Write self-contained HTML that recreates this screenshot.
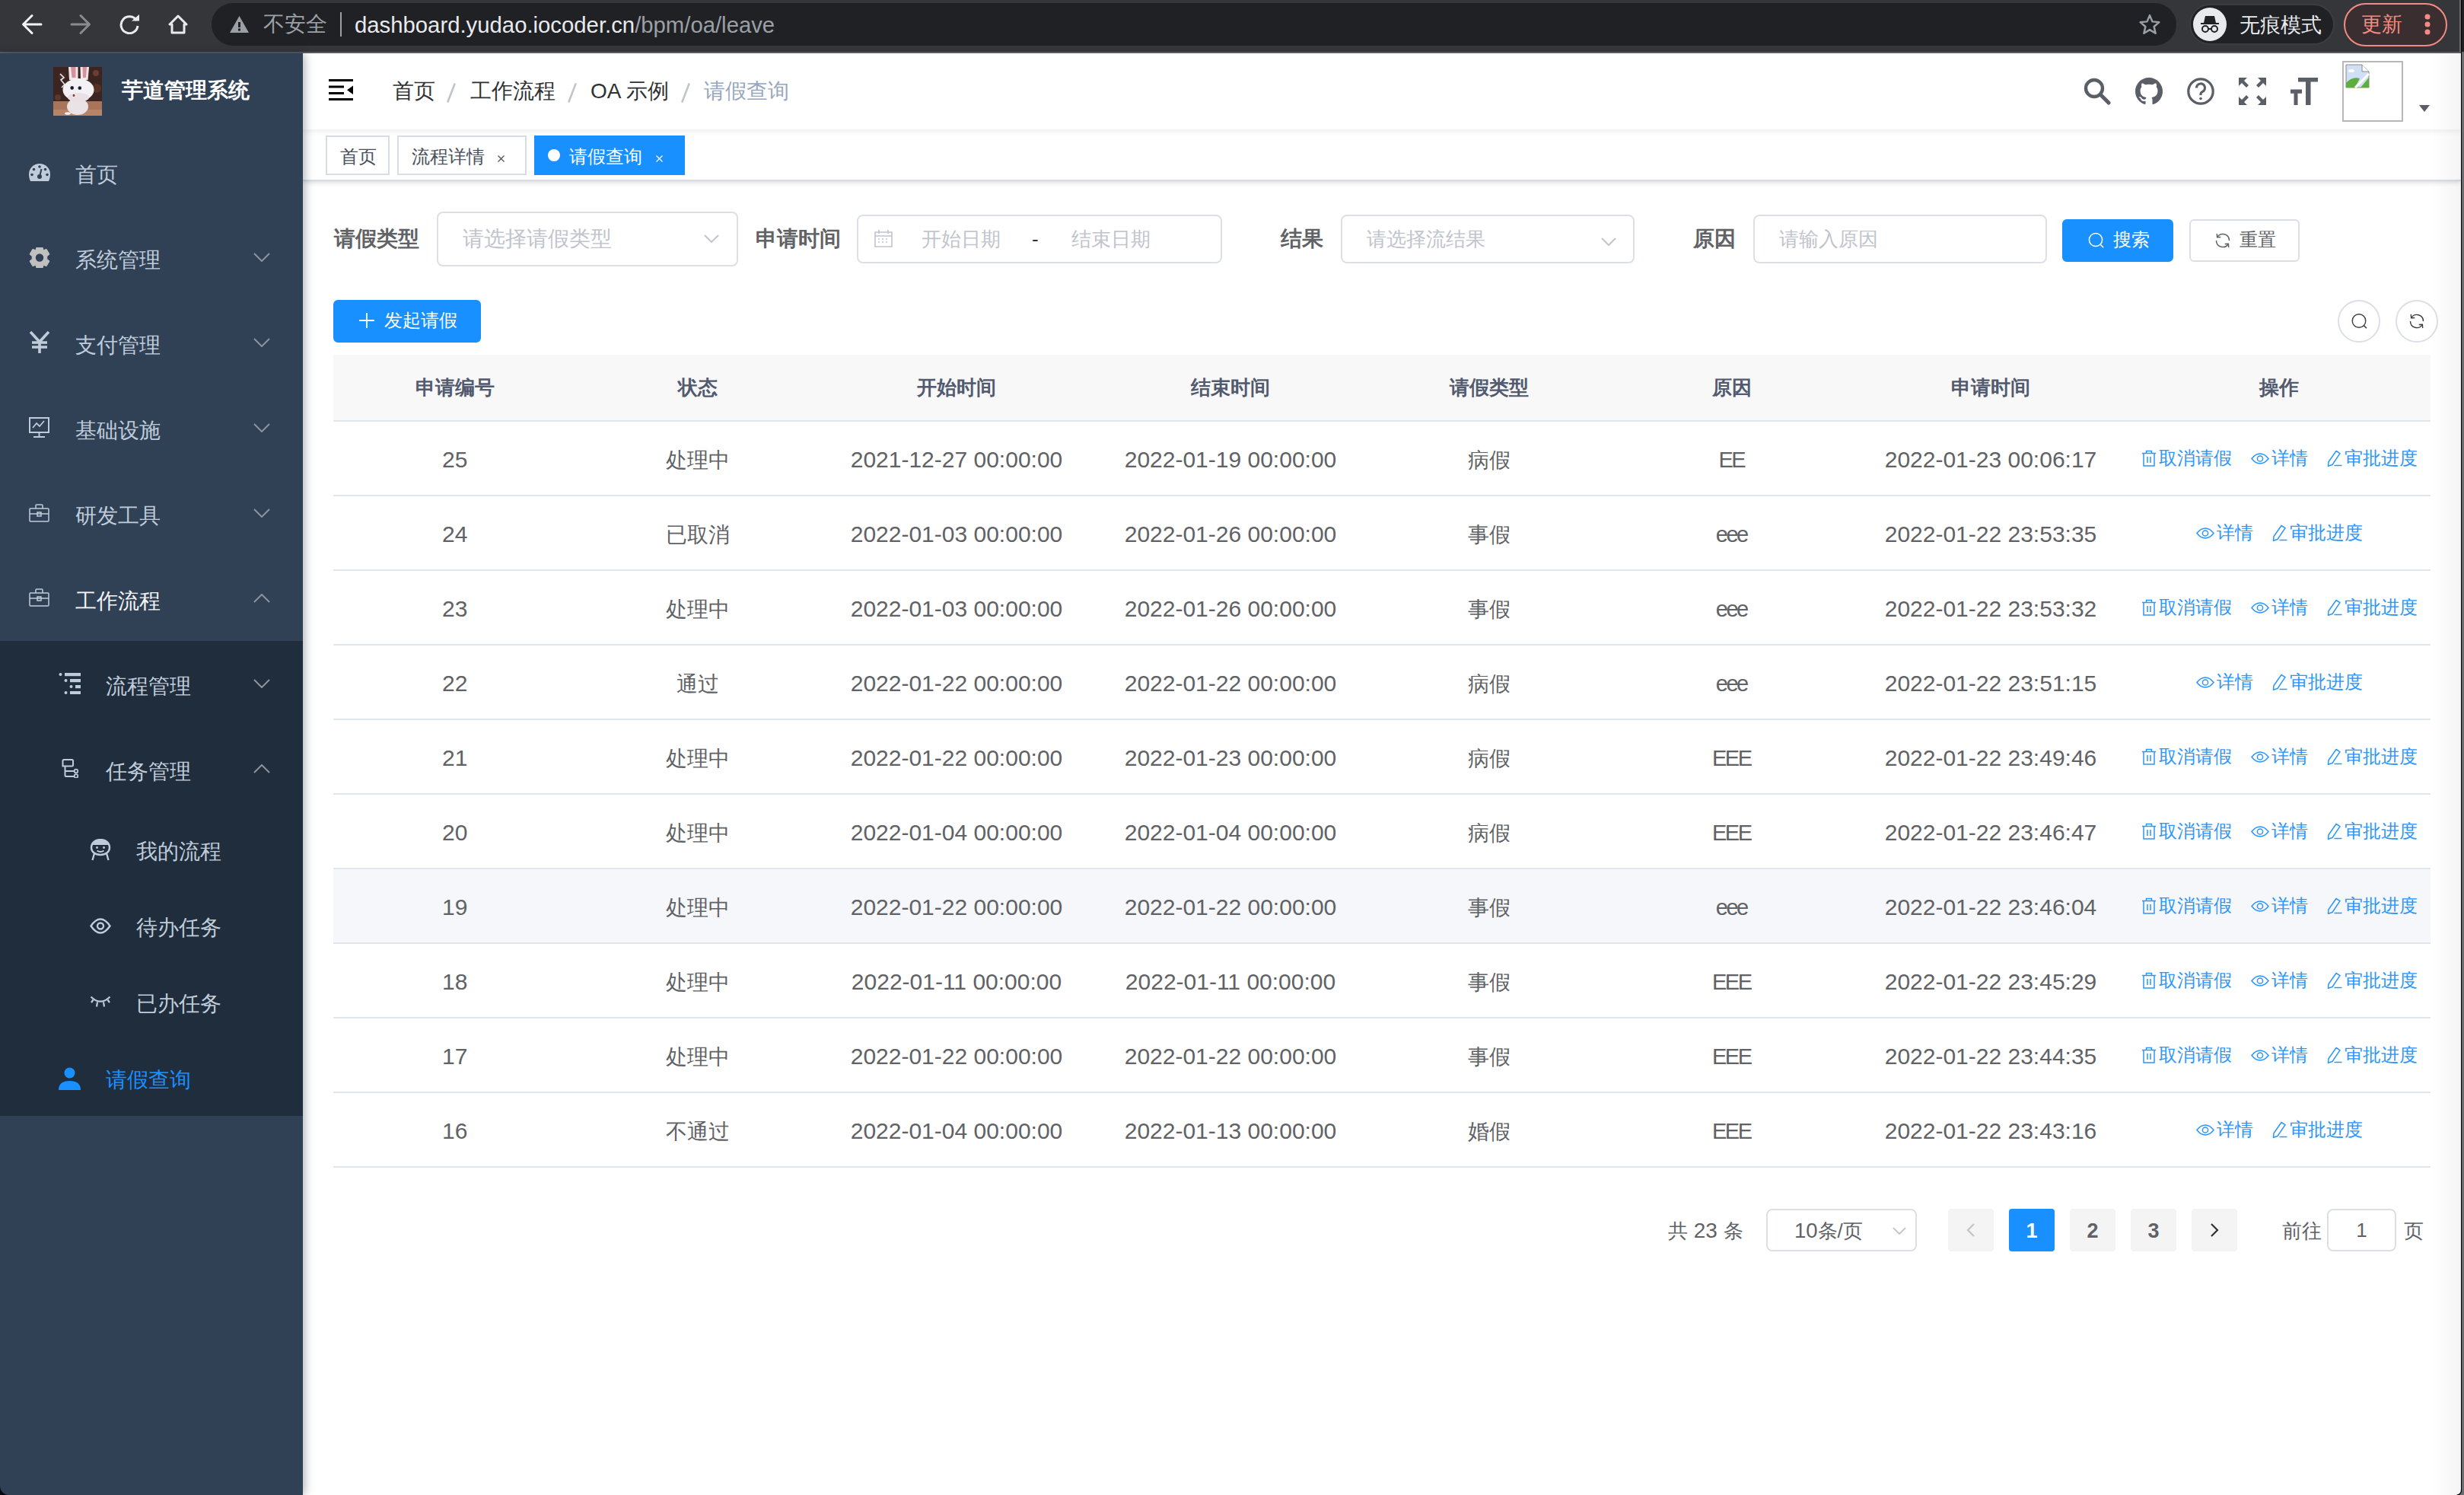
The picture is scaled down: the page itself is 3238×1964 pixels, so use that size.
<!DOCTYPE html>
<html><head><meta charset="utf-8">
<style>
*{box-sizing:border-box;margin:0;padding:0}
html,body{width:3238px;height:1964px;overflow:hidden;background:#fff;font-family:"Liberation Sans",sans-serif;}
.abs{position:absolute}
svg{display:block}
/* chrome */
#chrome{position:absolute;left:0;top:0;width:3238px;height:68px;background:#35363a}
#chromeline{position:absolute;left:0;top:68px;width:3238px;height:2px;background:#5c5d61}
#omni{position:absolute;left:278px;top:4px;width:2582px;height:56px;border-radius:28px;background:#202124}
.ctext{position:absolute;white-space:nowrap;line-height:1}
/* sidebar */
#sidebar{position:absolute;left:0;top:70px;width:398px;height:1894px;background:#304156;box-shadow:2px 0 12px rgba(0,21,41,.35);z-index:2}
.mi{position:absolute;left:0;width:398px;height:112px;color:#bfcbd9;font-size:28px}
.mi .ic{position:absolute}
.mi .tx{position:absolute;top:4px;line-height:112px;white-space:nowrap}
.mi .chev{position:absolute;left:333px;top:50px}
.sub{background:#1f2d3d}
.mi.s3{height:100px}
.mi.s3 .tx{line-height:100px;top:3px}
/* main */
#navbar{position:absolute;left:398px;top:70px;width:2836px;height:100px;background:#fff;box-shadow:0 2px 8px rgba(0,21,41,.08);z-index:1}
#tags{position:absolute;left:398px;top:170px;width:2836px;height:68px;background:#fff;border-bottom:2px solid #d8dce5;box-shadow:0 2px 6px 0 rgba(0,0,0,.12),0 0 6px 0 rgba(0,0,0,.04)}
.tag{position:absolute;top:8px;height:52px;border:2px solid #d8dce5;color:#495060;background:#fff;font-size:24px;line-height:51px;white-space:nowrap}
#rightedge{position:absolute;right:0;top:0;width:4px;height:1964px;background:#1c1c1e;z-index:5}
#rshade{position:absolute;left:3196px;top:70px;width:38px;height:1894px;background:linear-gradient(to right,rgba(0,0,0,0),rgba(0,0,0,.045));z-index:4;pointer-events:none}

.bc{position:absolute;top:0;line-height:100px;font-size:28px;color:#303133;white-space:nowrap}
.bcs{position:absolute;top:0;line-height:100px;font-size:28px;color:#c0c4cc;font-weight:bold}
.tag .x{position:absolute;top:0;font-size:24px;line-height:48px;color:#495060}

.lbl{position:absolute;top:278px;line-height:72px;font-size:28px;font-weight:bold;color:#606266;white-space:nowrap}
.inp{position:absolute;border:2px solid #dcdfe6;border-radius:8px;background:#fff}
.ph{position:absolute;top:0;line-height:60px;font-size:26px;color:#c0c4cc;white-space:nowrap}
.btn{position:absolute;border:2px solid #dcdfe6;border-radius:6px;background:#fff}
.btn.pri{background:#1890ff;border-color:#1890ff}
.bt{position:absolute;top:0;line-height:52px;font-size:24px;color:#fff;white-space:nowrap}
.circ{position:absolute;width:56px;height:56px;border:2px solid #dcdfe6;border-radius:28px;background:#fff}
.tbl{font-size:28px;color:#606266}
.thead{display:flex;height:88px;background:#f8f8f9;border-bottom:2px solid #dfe6ec}
.thead .c{font-size:26px;font-weight:bold;color:#515a6e;line-height:86px;text-align:center;white-space:nowrap}
.tr{display:flex;height:98px;border-bottom:2px solid #dfe6ec;background:#fff}
.tr.hov{background:#f5f7fa}
.tr .c{line-height:96px;text-align:center;white-space:nowrap;overflow:hidden}
.tr .c span.n{font-size:30px;position:relative;top:2px}
.tr .c span.r{font-size:29px;letter-spacing:-2.5px;left:-1px}
.tr .c span.z{position:relative;top:3px}
.ops{display:flex;justify-content:center;align-items:center;height:96px}
.op{display:flex;align-items:center;color:#2c96fc;font-size:24px;margin-left:25px}
.op:first-child{margin-left:0}
.op svg{margin-right:3px}
.pg{position:absolute;white-space:nowrap}
.pbtn{position:absolute;top:1588px;width:60px;height:56px;background:#f4f4f5;border-radius:4px;text-align:center;line-height:58px;font-size:27px;font-weight:bold;color:#606266}
.pbtn.act{background:#1890ff;color:#fff}
</style></head>
<body>
<!-- Browser chrome -->
<div id="chrome">
  <svg class="abs" style="left:28px;top:18px" width="28" height="28" viewBox="0 0 28 28"><path d="M26 14H3.5M14 2.5L2.5 14 14 25.5" stroke="#f1f3f4" stroke-width="3" fill="none" stroke-linecap="round" stroke-linejoin="round"/></svg>
  <svg class="abs" style="left:92px;top:18px" width="28" height="28" viewBox="0 0 28 28"><path d="M2 14h22.5M14 2.5L25.5 14 14 25.5" stroke="#8a8b8e" stroke-width="3" fill="none" stroke-linecap="round" stroke-linejoin="round"/></svg>
  <svg class="abs" style="left:157px;top:19px" width="28" height="26" viewBox="0 0 28 26"><path d="M22.5 8A11 11 0 1 0 24 15" stroke="#e8eaed" stroke-width="3" fill="none"/><path d="M16 8.5h10V0z" fill="#e8eaed"/></svg>
  <svg class="abs" style="left:221px;top:19px" width="26" height="26" viewBox="0 0 26 26"><path d="M13 2L2 13h3v11h16V13h3z" stroke="#e8eaed" stroke-width="3" fill="none" stroke-linejoin="round"/></svg>
  <div id="omni">
    <svg class="abs" style="left:24px;top:17px" width="25" height="22" viewBox="0 0 25 22"><path d="M12.5 0L25 22H0z" fill="#9aa0a6"/><rect x="11" y="8" width="3" height="7" fill="#202124"/><rect x="11" y="16.5" width="3" height="3" fill="#202124"/></svg>
    <div class="ctext" style="left:68px;top:14px;font-size:28px;color:#9aa0a6">不安全</div>
    <div class="abs" style="left:169px;top:12px;width:2px;height:32px;background:#9aa0a6"></div>
    <div class="ctext" style="left:188px;top:14px;font-size:29.3px;color:#e8eaed">dashboard.yudao.iocoder.cn<span style="color:#9aa0a6">/bpm/oa/leave</span></div>
    <svg class="abs" style="left:2532px;top:13px" width="30" height="30" viewBox="0 0 24 24"><path d="M12 2.5l2.8 6.6 7.1.6-5.4 4.7 1.6 7-6.1-3.7-6.1 3.7 1.6-7L2.1 9.7l7.1-.6z" stroke="#9aa0a6" stroke-width="2" fill="none" stroke-linejoin="round"/></svg>
  </div>
  <div class="abs" style="left:2877px;top:5px;width:191px;height:54px;border-radius:27px;background:#202124;border:2px solid #3c3d41"></div>
  <div class="abs" style="left:2882px;top:10px;width:44px;height:44px;border-radius:22px;background:#e8eaed"></div>
  <svg class="abs" style="left:2888px;top:16px" width="32" height="32" viewBox="0 0 32 32"><path d="M10 5h12l2 9H8z" fill="#202124"/><rect x="4" y="14" width="24" height="2" fill="#202124"/><circle cx="10" cy="22" r="4" stroke="#202124" stroke-width="2" fill="none"/><circle cx="22" cy="22" r="4" stroke="#202124" stroke-width="2" fill="none"/><path d="M14 22h4" stroke="#202124" stroke-width="2"/></svg>
  <div class="ctext" style="left:2943px;top:20px;font-size:26.5px;color:#e8eaed">无痕模式</div>
  <div class="abs" style="left:3080px;top:4px;width:136px;height:57px;border-radius:29px;background:#3b2e31;border:2px solid #f28b82"></div>
  <div class="ctext" style="left:3103px;top:19px;font-size:27px;color:#f28b82">更新</div>
  <svg class="abs" style="left:3184px;top:16px" width="12" height="32" viewBox="0 0 12 32"><circle cx="6" cy="6" r="3.5" fill="#f28b82"/><circle cx="6" cy="16" r="3.5" fill="#f28b82"/><circle cx="6" cy="26" r="3.5" fill="#f28b82"/></svg>
</div>
<div id="chromeline"></div>
<div class="abs" style="left:3232px;top:0;width:2px;height:68px;background:#6a6a6e;z-index:5"></div>
<div class="abs" style="left:3234px;top:0;width:1px;height:1964px;background:#000;z-index:5"></div>
<div class="abs" style="left:3235px;top:0;width:3px;height:68px;background:#1f1f21;z-index:5"></div>
<div class="abs" style="left:3235px;top:68px;width:3px;height:1896px;background:#6b6c70;z-index:5"></div>
<svg class="abs" style="left:3226px;top:1956px;z-index:6" width="9" height="8" viewBox="0 0 9 8"><path d="M8.5 0v2A6 6 0 0 1 2.5 8H9V0z" fill="#6b6c70"/><path d="M8.5 0v2A6 6 0 0 1 2.5 8" stroke="#000" stroke-width="1.2" fill="none"/></svg>
<svg class="abs" style="left:0;top:1952px;z-index:6" width="12" height="12" viewBox="0 0 12 12"><path d="M0 0A12 12 0 0 0 12 12H0z" fill="#000" opacity=".85"/></svg>

<!-- SIDEBAR -->
<div id="sidebar">

  <svg class="abs" style="left:70px;top:18px" width="64" height="64" viewBox="0 0 64 64">
        <rect width="64" height="64" fill="#2e1a16"/>
    <rect y="0" width="64" height="46" fill="#3c2520"/>
    <circle cx="56" cy="8" r="4" fill="#7a4a3a" opacity=".7"/><circle cx="57" cy="28" r="6" fill="#5a3628" opacity=".8"/><circle cx="6" cy="40" r="4" fill="#6a4030" opacity=".7"/><circle cx="12" cy="12" r="5" fill="#4a3028" opacity=".8"/>
    <rect y="45" width="64" height="19" fill="#a8745a"/>
    <rect y="56" width="64" height="8" fill="#b88468"/>
    <g>
    <path d="M20 0h12.5v17H21z" fill="#eeeaec"/><path d="M23 0h6.5v14h-5z" fill="#d9909a"/>
    <path d="M35.5 0h11.5l-1.5 17H36z" fill="#eeeaec"/><path d="M38.5 0h5.5l-1 14h-4z" fill="#d9909a"/>
    <ellipse cx="32" cy="52" rx="14" ry="11" fill="#e9e3e6"/>
    <ellipse cx="33" cy="30" rx="20.5" ry="15" fill="#f3f1f3"/>
    <ellipse cx="33" cy="40" rx="14" ry="6" fill="#eadfe3"/>
    <path d="M9 9l5 5-4 3 5 6-4 4" stroke="#e8e8ea" stroke-width="1.6" fill="none"/>
    <ellipse cx="19" cy="61" rx="4" ry="1.8" fill="#f0eef0"/>
    </g>
    <circle cx="24.7" cy="27.5" r="2.4" fill="#2a3a5a"/><circle cx="34.8" cy="27.7" r="2.4" fill="#2a3a5a"/>
    <circle cx="24.7" cy="27.5" r="1.4" fill="#101010"/><circle cx="34.8" cy="27.7" r="1.4" fill="#101010"/>
    <ellipse cx="27" cy="37.3" rx="1.3" ry="1.6" fill="#7a3a28"/>
  </svg>
  <div class="abs" style="left:160px;top:-1px;height:100px;line-height:100px;font-size:28px;font-weight:bold;color:#fff;white-space:nowrap">芋道管理系统</div>

  <div class="mi" style="top:100px">
    <svg class="ic" style="left:38px;top:45px" width="28" height="23" viewBox="0 0 28 23"><path d="M14 0A14 14 0 0 0 0 14c0 3 .6 6 2 9h24c1.4-3 2-6 2-9A14 14 0 0 0 14 0z" fill="#bfcbd9"/><circle cx="14" cy="4" r="1.8" fill="#304156"/><circle cx="6.5" cy="7.5" r="1.8" fill="#304156"/><circle cx="21.5" cy="7.5" r="1.8" fill="#304156"/><circle cx="4" cy="14.5" r="1.8" fill="#304156"/><circle cx="24" cy="14.5" r="1.8" fill="#304156"/><circle cx="14" cy="17" r="3" fill="#304156"/><path d="M14 17l2.5-10" stroke="#304156" stroke-width="2"/></svg>
    <div class="tx" style="left:99px">首页</div>
  </div>
  <div class="mi" style="top:212px">
    <svg class="ic" style="left:38px;top:43px" width="28" height="27" viewBox="0 0 28 27"><path d="M10 0h8l1.2 3.8 3.8-1.6 4 6.8-3.2 2.6v3.8l3.2 2.6-4 6.8-3.8-1.6L18 27h-8l-1.2-3.8-3.8 1.6-4-6.8 3.2-2.6v-3.8L1 9l4-6.8 3.8 1.6z" fill="#c0c0c0" stroke="#c0c0c0" stroke-width="1" stroke-linejoin="round"/><circle cx="14" cy="13.5" r="5.2" fill="#304156"/></svg>
    <div class="tx" style="left:99px">系统管理</div>
    <svg class="chev" width="22" height="12" viewBox="0 0 22 12"><path d="M1 1l10 10L21 1" stroke="#909399" stroke-width="2" fill="none"/></svg>
  </div>
  <div class="mi" style="top:324px">
    <svg class="ic" style="left:38px;top:41px" width="28" height="29" viewBox="0 0 28 29"><path d="M2 1l12 13L26 1M14 14v15M4 15h20M4 21h20" stroke="#bfcbd9" stroke-width="3.6" fill="none"/></svg>
    <div class="tx" style="left:99px">支付管理</div>
    <svg class="chev" width="22" height="12" viewBox="0 0 22 12"><path d="M1 1l10 10L21 1" stroke="#909399" stroke-width="2" fill="none"/></svg>
  </div>
  <div class="mi" style="top:436px">
    <svg class="ic" style="left:38px;top:42px" width="27" height="27" viewBox="0 0 27 27"><path d="M1 1h25v19H1zM13.5 20v6M6 26h15" stroke="#bfcbd9" stroke-width="2" fill="none"/><path d="M5 14l5-6 4 4 6-7" stroke="#bfcbd9" stroke-width="1.8" fill="none"/></svg>
    <div class="tx" style="left:99px">基础设施</div>
    <svg class="chev" width="22" height="12" viewBox="0 0 22 12"><path d="M1 1l10 10L21 1" stroke="#909399" stroke-width="2" fill="none"/></svg>
  </div>
  <div class="mi" style="top:548px">
    <svg class="ic" style="left:38px;top:44px" width="27" height="24" viewBox="0 0 27 24"><path d="M2 6h23q1 0 1 1v15q0 1-1 1H2q-1 0-1-1V7q0-1 1-1zM9 6V2q0-1 1-1h7q1 0 1 1v4M1 13h25M11 11h5v5h-5z" stroke="#bfcbd9" stroke-width="1.5" fill="none"/></svg>
    <div class="tx" style="left:99px">研发工具</div>
    <svg class="chev" width="22" height="12" viewBox="0 0 22 12"><path d="M1 1l10 10L21 1" stroke="#909399" stroke-width="2" fill="none"/></svg>
  </div>
  <div class="mi" style="top:660px">
    <svg class="ic" style="left:38px;top:43px" width="27" height="24" viewBox="0 0 27 24"><path d="M2 6h23q1 0 1 1v15q0 1-1 1H2q-1 0-1-1V7q0-1 1-1zM9 6V2q0-1 1-1h7q1 0 1 1v4M1 13h25M11 11h5v5h-5z" stroke="#bfcbd9" stroke-width="1.5" fill="none"/></svg>
    <div class="tx" style="left:99px;color:#f4f4f5">工作流程</div>
    <svg class="chev" width="22" height="12" viewBox="0 0 22 12"><path d="M1 11L11 1l10 10" stroke="#909399" stroke-width="2" fill="none"/></svg>
  </div>
  <div class="abs sub" style="left:0;top:772px;width:398px;height:624px"></div>
  <div class="mi" style="top:772px">
    <svg class="ic" style="left:77px;top:13px" width="30" height="30" viewBox="0 0 30 30"></svg>
    <svg class="ic" style="left:77px;top:41px" width="29" height="29" viewBox="0 0 29 29"><circle cx="2.5" cy="3" r="2" fill="#bfcbd9"/><rect x="8" y="1" width="21" height="4.2" fill="#bfcbd9"/><circle cx="9.5" cy="11" r="2" fill="#bfcbd9"/><rect x="15" y="9" width="14" height="4.2" fill="#bfcbd9"/><circle cx="16.5" cy="19" r="2" fill="#bfcbd9"/><rect x="22" y="17" width="7" height="4.2" fill="#bfcbd9"/><circle cx="9.5" cy="27" r="2" fill="#bfcbd9"/><rect x="15" y="25" width="14" height="4.2" fill="#bfcbd9"/></svg>
    <div class="tx" style="left:139px">流程管理</div>
    <svg class="chev" width="22" height="12" viewBox="0 0 22 12"><path d="M1 1l10 10L21 1" stroke="#909399" stroke-width="2" fill="none"/></svg>
  </div>
  <div class="mi" style="top:884px">
    <svg class="ic" style="left:81px;top:43px" width="22" height="25" viewBox="0 0 22 25"><path d="M4 9.5H1.5V2.5Q1.5 1 3 1h10.5q1.5 0 1.5 1.5v5.5q0 1.5-1.5 1.5H4.5v12q0 1.5 1.5 1.5h11" stroke="#bfcbd9" stroke-width="2" fill="none"/><path d="M4.5 16h12.5" stroke="#bfcbd9" stroke-width="2"/><circle cx="19" cy="16" r="2.3" stroke="#bfcbd9" stroke-width="1.8" fill="#1f2d3d"/><circle cx="19" cy="22.5" r="2.3" stroke="#bfcbd9" stroke-width="1.8" fill="#1f2d3d"/></svg>
    <div class="tx" style="left:139px">任务管理</div>
    <svg class="chev" width="22" height="12" viewBox="0 0 22 12"><path d="M1 11L11 1l10 10" stroke="#909399" stroke-width="2" fill="none"/></svg>
  </div>
  <div class="mi s3" style="top:996px">
    <svg class="ic" style="left:117px;top:36px" width="30" height="29" viewBox="0 0 30 29"><path d="M15 1C8 1 3 5.5 3 11.5 3 17 8 21 15 21s12-4 12-9.5C27 5.5 22 1 15 1z" stroke="#bfcbd9" stroke-width="2.4" fill="none"/><path d="M4.5 8C7 3.5 11 1.5 15 1.5S23 3.5 25.5 8z" fill="#bfcbd9"/><circle cx="10.5" cy="11.5" r="1.4" fill="#bfcbd9"/><circle cx="19.5" cy="11.5" r="1.4" fill="#bfcbd9"/><path d="M10.5 15.5q4.5 3 9 0" stroke="#bfcbd9" stroke-width="1.8" fill="none"/><path d="M7 19l-2.5 9M23 19l2.5 9" stroke="#bfcbd9" stroke-width="2.4"/></svg>
    <div class="tx" style="left:179px">我的流程</div>
  </div>
  <div class="mi s3" style="top:1096px">
    <svg class="ic" style="left:118px;top:40px" width="28" height="21" viewBox="0 0 28 21"><path d="M1.5 10.5Q7.5 1.5 14 1.5T26.5 10.5Q20.5 19.5 14 19.5T1.5 10.5z" stroke="#bfcbd9" stroke-width="2.4" fill="none"/><circle cx="14" cy="10.5" r="4" stroke="#bfcbd9" stroke-width="2.4" fill="none"/></svg>
    <div class="tx" style="left:179px">待办任务</div>
  </div>
  <div class="mi s3" style="top:1196px">
    <svg class="ic" style="left:118px;top:42px" width="28" height="16" viewBox="0 0 28 16"><path d="M1.5 1.5Q14 14 26.5 1.5" stroke="#bfcbd9" stroke-width="2.2" fill="none"/><path d="M4.5 5.5L2 9M10 8.5l-1 6M18 8.5l1 6M23.5 5.5L26 9" stroke="#bfcbd9" stroke-width="2.2"/></svg>
    <div class="tx" style="left:179px">已办任务</div>
  </div>
  <div class="mi s3" style="top:1296px">
    <svg class="ic" style="left:77px;top:36px" width="29" height="30" viewBox="0 0 29 30"><circle cx="14.5" cy="7.5" r="7" fill="#1890ff"/><path d="M0 30q0-12 14.5-12T29 30z" fill="#1890ff"/></svg>
    <div class="tx" style="left:139px;color:#1890ff">请假查询</div>
  </div>

</div>

<!-- NAVBAR -->
<div id="navbar">

  <svg class="abs" style="left:34px;top:34px" width="32" height="28" viewBox="0 0 32 28"><rect x="0" y="0" width="32" height="3" fill="#000"/><rect x="0" y="8.5" width="20" height="3" fill="#000"/><rect x="0" y="17" width="20" height="3" fill="#000"/><rect x="0" y="25" width="32" height="3" fill="#000"/><path d="M32 8.5v11.5l-8-5.75z" fill="#000"/></svg>
  <div class="bc" style="left:118px">首页</div>
  <svg class="abs" style="left:189px;top:39px" width="12" height="26" viewBox="0 0 12 26"><path d="M10.8 0.5L1.2 25.5" stroke="#c0c4cc" stroke-width="2.6"/></svg>
  <div class="bc" style="left:220px">工作流程</div>
  <svg class="abs" style="left:348px;top:39px" width="12" height="26" viewBox="0 0 12 26"><path d="M10.8 0.5L1.2 25.5" stroke="#c0c4cc" stroke-width="2.6"/></svg>
  <div class="bc" style="left:378px">OA 示例</div>
  <svg class="abs" style="left:496.5px;top:39px" width="12" height="26" viewBox="0 0 12 26"><path d="M10.8 0.5L1.2 25.5" stroke="#c0c4cc" stroke-width="2.6"/></svg>
  <div class="bc" style="left:527px;color:#97a8be">请假查询</div>
  <svg class="abs" style="left:2340px;top:32px" width="36" height="36" viewBox="0 0 36 36"><circle cx="14" cy="14" r="11" stroke="#5a5e66" stroke-width="4.4" fill="none"/><path d="M22 22l11 11" stroke="#5a5e66" stroke-width="5" stroke-linecap="round"/></svg>
  <svg class="abs" style="left:2408px;top:32px" width="36" height="36" viewBox="0 0 16 16"><path fill="#5a5e66" d="M8 0C3.58 0 0 3.58 0 8c0 3.54 2.29 6.53 5.47 7.59.4.07.55-.17.55-.38 0-.19-.01-.82-.01-1.49-2.01.37-2.53-.49-2.69-.94-.09-.23-.48-.94-.82-1.13-.28-.15-.68-.52-.01-.53.63-.01 1.08.58 1.23.82.72 1.21 1.87.87 2.33.66.07-.52.28-.87.51-1.07-1.78-.2-3.64-.89-3.64-3.95 0-.87.31-1.59.82-2.15-.08-.2-.36-1.02.08-2.12 0 0 .67-.21 2.2.82.64-.18 1.32-.27 2-.27.68 0 1.36.09 2 .27 1.53-1.04 2.2-.82 2.2-.82.44 1.1.16 1.92.08 2.12.51.56.82 1.27.82 2.15 0 3.07-1.87 3.75-3.65 3.95.29.25.54.73.54 1.48 0 1.07-.01 1.93-.01 2.2 0 .21.15.46.55.38A8.013 8.013 0 0016 8c0-4.42-3.58-8-8-8z"/></svg>
  <svg class="abs" style="left:2476px;top:32px" width="36" height="36" viewBox="0 0 36 36"><circle cx="18" cy="18" r="16.2" stroke="#5a5e66" stroke-width="3.2" fill="none"/><path d="M12.5 13.5a5.5 5.5 0 1 1 7.5 5.1c-1.3.6-2 1.4-2 2.8v1.6" stroke="#5a5e66" stroke-width="3.2" fill="none"/><circle cx="18" cy="27.5" r="1.8" fill="#5a5e66"/></svg>
  <svg class="abs" style="left:2544px;top:32px" width="36" height="36" viewBox="0 0 36 36"><path fill="#5a5e66" d="M0 0h11l-4 4 6 6-3 3-6-6-4 4zM36 0v11l-4-4-6 6-3-3 6-6-4-4zM0 36V25l4 4 6-6 3 3-6 6 4 4zM36 36H25l4-4-6-6 3-3 6 6 4-4z"/></svg>
  <svg class="abs" style="left:2612px;top:32px" width="36" height="36" viewBox="0 0 36 36"><path fill="#5a5e66" d="M10 0h26v5.5H26.5V36h-6.5V5.5H10zM0 15.5h15v5.2H9.5V36H4.5V20.7H0z"/></svg>
  <div class="abs" style="left:2680px;top:10px;width:80px;height:80px;border:2px solid #b8b8b8;background:#fff"></div>
  <svg class="abs" style="left:2684px;top:14px" width="32" height="32" viewBox="0 0 32 32"><path d="M1 1h21l9 9v21H1z" fill="#cfdff5" stroke="#8a8a8a" stroke-width="1"/><path d="M22 1v9h9" fill="#fff" stroke="#8a8a8a" stroke-width="1"/><path d="M1 31v-6q8-9 18-6l-6 12z" fill="#5cae3e"/><path d="M31 18v13H20z" fill="#5cae3e"/><path d="M13 31l18-18" stroke="#fff" stroke-width="3"/><ellipse cx="8" cy="9" rx="4" ry="2" fill="#fff"/></svg>
  <svg class="abs" style="left:2781px;top:68px" width="14" height="9" viewBox="0 0 14 9"><path d="M0 0h14L7 9z" fill="#5a5e66"/></svg>

</div>
<div id="tags">

  <div class="tag" style="left:30px;width:84px;padding-left:17px">首页</div>
  <div class="tag" style="left:124px;width:170px;padding-left:17px">流程详情<svg class="abs" style="left:129px;top:23px" width="11" height="11" viewBox="0 0 11 11"><path d="M1.5 1.5l8 8M9.5 1.5l-8 8" stroke="#495060" stroke-width="1.2"/></svg></div>
  <div class="tag" style="left:304px;width:198px;background:#1890ff;border-color:#1890ff;color:#fff;padding-left:44px"><span class="abs" style="left:16px;top:16px;width:16px;height:16px;border-radius:8px;background:#fff"></span>请假查询<svg class="abs" style="left:157px;top:23px" width="11" height="11" viewBox="0 0 11 11"><path d="M1.5 1.5l8 8M9.5 1.5l-8 8" stroke="#fff" stroke-width="1.2"/></svg></div>

</div>


<div id="content">
  <div class="lbl" style="left:439px">请假类型</div>
  <div class="inp" style="left:574px;top:278px;width:396px;height:72px"><span class="ph" style="left:32px;font-size:28px;line-height:68px">请选择请假类型</span>
    <svg class="abs" style="left:349px;top:28px" width="20" height="11" viewBox="0 0 20 11"><path d="M1 1l9 9 9-9" stroke="#c0c4cc" stroke-width="2" fill="none"/></svg></div>
  <div class="lbl" style="left:993px">申请时间</div>
  <div class="inp" style="left:1126px;top:282px;width:480px;height:64px">
    <svg class="abs" style="left:21px;top:18px" width="24" height="23" viewBox="0 0 24 23"><path d="M1 3h22v19H1zM1 8h22M6 0v5M18 0v5" stroke="#c0c4cc" stroke-width="1.6" fill="none"/><path d="M5 12h2M10 12h2M15 12h2M5 16h2M10 16h2M15 16h2" stroke="#c0c4cc" stroke-width="1.6"/></svg>
    <span class="ph" style="left:83px">开始日期</span><span class="ph" style="left:228px;color:#303133">-</span><span class="ph" style="left:280px">结束日期</span></div>
  <div class="lbl" style="left:1683px">结果</div>
  <div class="inp" style="left:1762px;top:282px;width:386px;height:64px"><span class="ph" style="left:32px">请选择流结果</span>
    <svg class="abs" style="left:340px;top:28px" width="20" height="11" viewBox="0 0 20 11"><path d="M1 1l9 9 9-9" stroke="#c0c4cc" stroke-width="2" fill="none"/></svg></div>
  <div class="lbl" style="left:2225px">原因</div>
  <div class="inp" style="left:2304px;top:282px;width:386px;height:64px"><span class="ph" style="left:32px">请输入原因</span></div>
  <div class="btn pri" style="left:2710px;top:288px;width:146px;height:56px">
    <svg class="abs" style="left:32px;top:15px" width="22" height="22" viewBox="0 0 22 22"><circle cx="10" cy="10" r="8.6" stroke="#fff" stroke-width="1.5" fill="none"/><path d="M16.2 16.2l4 4" stroke="#fff" stroke-width="1.6"/></svg>
    <span class="bt" style="left:65px;top:-1px">搜索</span></div>
  <div class="btn" style="left:2877px;top:288px;width:145px;height:56px">
    <svg class="abs" style="left:32px;top:16px" width="20" height="20" viewBox="0 0 20 20"><path d="M2.64 5.75A8.5 8.5 0 0 1 18.5 10M1.5 10A8.5 8.5 0 0 0 17.36 14.25" stroke="#606266" stroke-width="1.5" fill="none"/><path d="M2.3 1L2.64 5.75 7.3 5.5M12.7 14.5l4.66-.25.34 4.75" stroke="#606266" stroke-width="1.5" fill="none"/></svg>
    <span class="bt" style="left:64px;top:-1px;color:#606266">重置</span></div>

  <div class="btn pri" style="left:438px;top:394px;width:194px;height:56px">
    <svg class="abs" style="left:32px;top:15px" width="20" height="20" viewBox="0 0 20 20"><path d="M10 0v20M0 10h20" stroke="#fff" stroke-width="1.8"/></svg>
    <span class="bt" style="left:65px;top:-1px">发起请假</span></div>
  <div class="circ" style="left:3072px;top:394px"><svg class="abs" style="left:16px;top:15px" width="22" height="22" viewBox="0 0 22 22"><circle cx="10" cy="10.5" r="8.8" stroke="#3c3d40" stroke-width="1.4" fill="none"/><path d="M16.4 16.6l3.6 3.6" stroke="#3c3d40" stroke-width="1.5"/></svg></div>
  <div class="circ" style="left:3148px;top:394px"><svg class="abs" style="left:16px;top:15px" width="20" height="22" viewBox="0 0 20 22"><path d="M2.64 6.75A8.5 8.5 0 0 1 18.5 11M1.5 11A8.5 8.5 0 0 0 17.36 15.25" stroke="#3c3d40" stroke-width="1.4" fill="none"/><path d="M2.3 2L2.64 6.75 7.3 6.5M12.7 15.5l4.66-.25.34 4.75" stroke="#3c3d40" stroke-width="1.4" fill="none"/></svg></div>
<div class="abs tbl" style="left:438px;top:466px;width:2756px">
<div class="thead"><div class="c" style="width:319.5px"><span class="z">申请编号</span></div><div class="c" style="width:319.5px"><span class="z">状态</span></div><div class="c" style="width:360px"><span class="z">开始时间</span></div><div class="c" style="width:360px"><span class="z">结束时间</span></div><div class="c" style="width:319.5px"><span class="z">请假类型</span></div><div class="c" style="width:319.5px"><span class="z">原因</span></div><div class="c" style="width:360px"><span class="z">申请时间</span></div><div class="c" style="width:398px"><span class="z">操作</span></div></div>
<div class="tr"><div class="c" style="width:319.5px"><span class="n">25</span></div><div class="c" style="width:319.5px"><span class="z">处理中</span></div><div class="c" style="width:360px"><span class="n">2021-12-27 00:00:00</span></div><div class="c" style="width:360px"><span class="n">2022-01-19 00:00:00</span></div><div class="c" style="width:319.5px"><span class="z">病假</span></div><div class="c" style="width:319.5px"><span class="n r">EE</span></div><div class="c" style="width:360px"><span class="n">2022-01-23 00:06:17</span></div><div class="c" style="width:398px"><div class="ops"><span class="op"><svg width="20" height="22" viewBox="0 0 20 22"><path d="M1 4.5h18M6.5 4.5V1.5h7v3M3 4.5v16.5h14V4.5M8 9v8M12 9v8" stroke="#2c96fc" stroke-width="1.5" fill="none"/></svg><span>取消请假</span></span><span class="op"><svg width="24" height="15" viewBox="0 0 24 15"><path d="M1 7.5Q6 1 12 1t11 6.5Q18 14 12 14T1 7.5z" stroke="#2c96fc" stroke-width="1.5" fill="none"/><circle cx="12" cy="7.5" r="3.6" stroke="#2c96fc" stroke-width="1.5" fill="none"/></svg><span>详情</span></span><span class="op"><svg width="20" height="22" viewBox="0 0 20 22"><path d="M12 1.5l5 3.2L7 19.5l-5.5 1.8.5-5.6z" stroke="#2c96fc" stroke-width="1.5" fill="none" stroke-linejoin="round"/><path d="M9.5 20.5h10" stroke="#2c96fc" stroke-width="1.5"/></svg><span>审批进度</span></span></div></div></div>
<div class="tr"><div class="c" style="width:319.5px"><span class="n">24</span></div><div class="c" style="width:319.5px"><span class="z">已取消</span></div><div class="c" style="width:360px"><span class="n">2022-01-03 00:00:00</span></div><div class="c" style="width:360px"><span class="n">2022-01-26 00:00:00</span></div><div class="c" style="width:319.5px"><span class="z">事假</span></div><div class="c" style="width:319.5px"><span class="n r">eee</span></div><div class="c" style="width:360px"><span class="n">2022-01-22 23:53:35</span></div><div class="c" style="width:398px"><div class="ops"><span class="op"><svg width="24" height="15" viewBox="0 0 24 15"><path d="M1 7.5Q6 1 12 1t11 6.5Q18 14 12 14T1 7.5z" stroke="#2c96fc" stroke-width="1.5" fill="none"/><circle cx="12" cy="7.5" r="3.6" stroke="#2c96fc" stroke-width="1.5" fill="none"/></svg><span>详情</span></span><span class="op"><svg width="20" height="22" viewBox="0 0 20 22"><path d="M12 1.5l5 3.2L7 19.5l-5.5 1.8.5-5.6z" stroke="#2c96fc" stroke-width="1.5" fill="none" stroke-linejoin="round"/><path d="M9.5 20.5h10" stroke="#2c96fc" stroke-width="1.5"/></svg><span>审批进度</span></span></div></div></div>
<div class="tr"><div class="c" style="width:319.5px"><span class="n">23</span></div><div class="c" style="width:319.5px"><span class="z">处理中</span></div><div class="c" style="width:360px"><span class="n">2022-01-03 00:00:00</span></div><div class="c" style="width:360px"><span class="n">2022-01-26 00:00:00</span></div><div class="c" style="width:319.5px"><span class="z">事假</span></div><div class="c" style="width:319.5px"><span class="n r">eee</span></div><div class="c" style="width:360px"><span class="n">2022-01-22 23:53:32</span></div><div class="c" style="width:398px"><div class="ops"><span class="op"><svg width="20" height="22" viewBox="0 0 20 22"><path d="M1 4.5h18M6.5 4.5V1.5h7v3M3 4.5v16.5h14V4.5M8 9v8M12 9v8" stroke="#2c96fc" stroke-width="1.5" fill="none"/></svg><span>取消请假</span></span><span class="op"><svg width="24" height="15" viewBox="0 0 24 15"><path d="M1 7.5Q6 1 12 1t11 6.5Q18 14 12 14T1 7.5z" stroke="#2c96fc" stroke-width="1.5" fill="none"/><circle cx="12" cy="7.5" r="3.6" stroke="#2c96fc" stroke-width="1.5" fill="none"/></svg><span>详情</span></span><span class="op"><svg width="20" height="22" viewBox="0 0 20 22"><path d="M12 1.5l5 3.2L7 19.5l-5.5 1.8.5-5.6z" stroke="#2c96fc" stroke-width="1.5" fill="none" stroke-linejoin="round"/><path d="M9.5 20.5h10" stroke="#2c96fc" stroke-width="1.5"/></svg><span>审批进度</span></span></div></div></div>
<div class="tr"><div class="c" style="width:319.5px"><span class="n">22</span></div><div class="c" style="width:319.5px"><span class="z">通过</span></div><div class="c" style="width:360px"><span class="n">2022-01-22 00:00:00</span></div><div class="c" style="width:360px"><span class="n">2022-01-22 00:00:00</span></div><div class="c" style="width:319.5px"><span class="z">病假</span></div><div class="c" style="width:319.5px"><span class="n r">eee</span></div><div class="c" style="width:360px"><span class="n">2022-01-22 23:51:15</span></div><div class="c" style="width:398px"><div class="ops"><span class="op"><svg width="24" height="15" viewBox="0 0 24 15"><path d="M1 7.5Q6 1 12 1t11 6.5Q18 14 12 14T1 7.5z" stroke="#2c96fc" stroke-width="1.5" fill="none"/><circle cx="12" cy="7.5" r="3.6" stroke="#2c96fc" stroke-width="1.5" fill="none"/></svg><span>详情</span></span><span class="op"><svg width="20" height="22" viewBox="0 0 20 22"><path d="M12 1.5l5 3.2L7 19.5l-5.5 1.8.5-5.6z" stroke="#2c96fc" stroke-width="1.5" fill="none" stroke-linejoin="round"/><path d="M9.5 20.5h10" stroke="#2c96fc" stroke-width="1.5"/></svg><span>审批进度</span></span></div></div></div>
<div class="tr"><div class="c" style="width:319.5px"><span class="n">21</span></div><div class="c" style="width:319.5px"><span class="z">处理中</span></div><div class="c" style="width:360px"><span class="n">2022-01-22 00:00:00</span></div><div class="c" style="width:360px"><span class="n">2022-01-23 00:00:00</span></div><div class="c" style="width:319.5px"><span class="z">病假</span></div><div class="c" style="width:319.5px"><span class="n r">EEE</span></div><div class="c" style="width:360px"><span class="n">2022-01-22 23:49:46</span></div><div class="c" style="width:398px"><div class="ops"><span class="op"><svg width="20" height="22" viewBox="0 0 20 22"><path d="M1 4.5h18M6.5 4.5V1.5h7v3M3 4.5v16.5h14V4.5M8 9v8M12 9v8" stroke="#2c96fc" stroke-width="1.5" fill="none"/></svg><span>取消请假</span></span><span class="op"><svg width="24" height="15" viewBox="0 0 24 15"><path d="M1 7.5Q6 1 12 1t11 6.5Q18 14 12 14T1 7.5z" stroke="#2c96fc" stroke-width="1.5" fill="none"/><circle cx="12" cy="7.5" r="3.6" stroke="#2c96fc" stroke-width="1.5" fill="none"/></svg><span>详情</span></span><span class="op"><svg width="20" height="22" viewBox="0 0 20 22"><path d="M12 1.5l5 3.2L7 19.5l-5.5 1.8.5-5.6z" stroke="#2c96fc" stroke-width="1.5" fill="none" stroke-linejoin="round"/><path d="M9.5 20.5h10" stroke="#2c96fc" stroke-width="1.5"/></svg><span>审批进度</span></span></div></div></div>
<div class="tr"><div class="c" style="width:319.5px"><span class="n">20</span></div><div class="c" style="width:319.5px"><span class="z">处理中</span></div><div class="c" style="width:360px"><span class="n">2022-01-04 00:00:00</span></div><div class="c" style="width:360px"><span class="n">2022-01-04 00:00:00</span></div><div class="c" style="width:319.5px"><span class="z">病假</span></div><div class="c" style="width:319.5px"><span class="n r">EEE</span></div><div class="c" style="width:360px"><span class="n">2022-01-22 23:46:47</span></div><div class="c" style="width:398px"><div class="ops"><span class="op"><svg width="20" height="22" viewBox="0 0 20 22"><path d="M1 4.5h18M6.5 4.5V1.5h7v3M3 4.5v16.5h14V4.5M8 9v8M12 9v8" stroke="#2c96fc" stroke-width="1.5" fill="none"/></svg><span>取消请假</span></span><span class="op"><svg width="24" height="15" viewBox="0 0 24 15"><path d="M1 7.5Q6 1 12 1t11 6.5Q18 14 12 14T1 7.5z" stroke="#2c96fc" stroke-width="1.5" fill="none"/><circle cx="12" cy="7.5" r="3.6" stroke="#2c96fc" stroke-width="1.5" fill="none"/></svg><span>详情</span></span><span class="op"><svg width="20" height="22" viewBox="0 0 20 22"><path d="M12 1.5l5 3.2L7 19.5l-5.5 1.8.5-5.6z" stroke="#2c96fc" stroke-width="1.5" fill="none" stroke-linejoin="round"/><path d="M9.5 20.5h10" stroke="#2c96fc" stroke-width="1.5"/></svg><span>审批进度</span></span></div></div></div>
<div class="tr hov"><div class="c" style="width:319.5px"><span class="n">19</span></div><div class="c" style="width:319.5px"><span class="z">处理中</span></div><div class="c" style="width:360px"><span class="n">2022-01-22 00:00:00</span></div><div class="c" style="width:360px"><span class="n">2022-01-22 00:00:00</span></div><div class="c" style="width:319.5px"><span class="z">事假</span></div><div class="c" style="width:319.5px"><span class="n r">eee</span></div><div class="c" style="width:360px"><span class="n">2022-01-22 23:46:04</span></div><div class="c" style="width:398px"><div class="ops"><span class="op"><svg width="20" height="22" viewBox="0 0 20 22"><path d="M1 4.5h18M6.5 4.5V1.5h7v3M3 4.5v16.5h14V4.5M8 9v8M12 9v8" stroke="#2c96fc" stroke-width="1.5" fill="none"/></svg><span>取消请假</span></span><span class="op"><svg width="24" height="15" viewBox="0 0 24 15"><path d="M1 7.5Q6 1 12 1t11 6.5Q18 14 12 14T1 7.5z" stroke="#2c96fc" stroke-width="1.5" fill="none"/><circle cx="12" cy="7.5" r="3.6" stroke="#2c96fc" stroke-width="1.5" fill="none"/></svg><span>详情</span></span><span class="op"><svg width="20" height="22" viewBox="0 0 20 22"><path d="M12 1.5l5 3.2L7 19.5l-5.5 1.8.5-5.6z" stroke="#2c96fc" stroke-width="1.5" fill="none" stroke-linejoin="round"/><path d="M9.5 20.5h10" stroke="#2c96fc" stroke-width="1.5"/></svg><span>审批进度</span></span></div></div></div>
<div class="tr"><div class="c" style="width:319.5px"><span class="n">18</span></div><div class="c" style="width:319.5px"><span class="z">处理中</span></div><div class="c" style="width:360px"><span class="n">2022-01-11 00:00:00</span></div><div class="c" style="width:360px"><span class="n">2022-01-11 00:00:00</span></div><div class="c" style="width:319.5px"><span class="z">事假</span></div><div class="c" style="width:319.5px"><span class="n r">EEE</span></div><div class="c" style="width:360px"><span class="n">2022-01-22 23:45:29</span></div><div class="c" style="width:398px"><div class="ops"><span class="op"><svg width="20" height="22" viewBox="0 0 20 22"><path d="M1 4.5h18M6.5 4.5V1.5h7v3M3 4.5v16.5h14V4.5M8 9v8M12 9v8" stroke="#2c96fc" stroke-width="1.5" fill="none"/></svg><span>取消请假</span></span><span class="op"><svg width="24" height="15" viewBox="0 0 24 15"><path d="M1 7.5Q6 1 12 1t11 6.5Q18 14 12 14T1 7.5z" stroke="#2c96fc" stroke-width="1.5" fill="none"/><circle cx="12" cy="7.5" r="3.6" stroke="#2c96fc" stroke-width="1.5" fill="none"/></svg><span>详情</span></span><span class="op"><svg width="20" height="22" viewBox="0 0 20 22"><path d="M12 1.5l5 3.2L7 19.5l-5.5 1.8.5-5.6z" stroke="#2c96fc" stroke-width="1.5" fill="none" stroke-linejoin="round"/><path d="M9.5 20.5h10" stroke="#2c96fc" stroke-width="1.5"/></svg><span>审批进度</span></span></div></div></div>
<div class="tr"><div class="c" style="width:319.5px"><span class="n">17</span></div><div class="c" style="width:319.5px"><span class="z">处理中</span></div><div class="c" style="width:360px"><span class="n">2022-01-22 00:00:00</span></div><div class="c" style="width:360px"><span class="n">2022-01-22 00:00:00</span></div><div class="c" style="width:319.5px"><span class="z">事假</span></div><div class="c" style="width:319.5px"><span class="n r">EEE</span></div><div class="c" style="width:360px"><span class="n">2022-01-22 23:44:35</span></div><div class="c" style="width:398px"><div class="ops"><span class="op"><svg width="20" height="22" viewBox="0 0 20 22"><path d="M1 4.5h18M6.5 4.5V1.5h7v3M3 4.5v16.5h14V4.5M8 9v8M12 9v8" stroke="#2c96fc" stroke-width="1.5" fill="none"/></svg><span>取消请假</span></span><span class="op"><svg width="24" height="15" viewBox="0 0 24 15"><path d="M1 7.5Q6 1 12 1t11 6.5Q18 14 12 14T1 7.5z" stroke="#2c96fc" stroke-width="1.5" fill="none"/><circle cx="12" cy="7.5" r="3.6" stroke="#2c96fc" stroke-width="1.5" fill="none"/></svg><span>详情</span></span><span class="op"><svg width="20" height="22" viewBox="0 0 20 22"><path d="M12 1.5l5 3.2L7 19.5l-5.5 1.8.5-5.6z" stroke="#2c96fc" stroke-width="1.5" fill="none" stroke-linejoin="round"/><path d="M9.5 20.5h10" stroke="#2c96fc" stroke-width="1.5"/></svg><span>审批进度</span></span></div></div></div>
<div class="tr"><div class="c" style="width:319.5px"><span class="n">16</span></div><div class="c" style="width:319.5px"><span class="z">不通过</span></div><div class="c" style="width:360px"><span class="n">2022-01-04 00:00:00</span></div><div class="c" style="width:360px"><span class="n">2022-01-13 00:00:00</span></div><div class="c" style="width:319.5px"><span class="z">婚假</span></div><div class="c" style="width:319.5px"><span class="n r">EEE</span></div><div class="c" style="width:360px"><span class="n">2022-01-22 23:43:16</span></div><div class="c" style="width:398px"><div class="ops"><span class="op"><svg width="24" height="15" viewBox="0 0 24 15"><path d="M1 7.5Q6 1 12 1t11 6.5Q18 14 12 14T1 7.5z" stroke="#2c96fc" stroke-width="1.5" fill="none"/><circle cx="12" cy="7.5" r="3.6" stroke="#2c96fc" stroke-width="1.5" fill="none"/></svg><span>详情</span></span><span class="op"><svg width="20" height="22" viewBox="0 0 20 22"><path d="M12 1.5l5 3.2L7 19.5l-5.5 1.8.5-5.6z" stroke="#2c96fc" stroke-width="1.5" fill="none" stroke-linejoin="round"/><path d="M9.5 20.5h10" stroke="#2c96fc" stroke-width="1.5"/></svg><span>审批进度</span></span></div></div></div>
</div>
  <div class="pg" style="left:2192px;top:1589px;line-height:56px;font-size:26px;color:#606266">共<span style="font-size:28px"> 23 </span>条</div>
  <div class="inp" style="left:2321px;top:1588px;width:198px;height:56px"><span class="ph" style="left:35px;top:1px;color:#606266;line-height:52px;font-size:26px"><span style="font-size:27.5px">10</span>条/页</span>
    <svg class="abs" style="left:164px;top:22px" width="18" height="10" viewBox="0 0 18 10"><path d="M1 1l8 8 8-8" stroke="#c0c4cc" stroke-width="1.8" fill="none"/></svg></div>
  <div class="pbtn" style="left:2560px"><svg class="abs" style="left:24px;top:19px" width="11" height="18" viewBox="0 0 11 18"><path d="M10 1L2 9l8 8" stroke="#c0c4cc" stroke-width="2.2" fill="none"/></svg></div>
  <div class="pbtn act" style="left:2640px">1</div>
  <div class="pbtn" style="left:2720px">2</div>
  <div class="pbtn" style="left:2800px">3</div>
  <div class="pbtn" style="left:2880px"><svg class="abs" style="left:25px;top:19px" width="11" height="18" viewBox="0 0 11 18"><path d="M1 1l8 8-8 8" stroke="#303133" stroke-width="2.2" fill="none"/></svg></div>
  <div class="pg" style="left:2999px;top:1589px;line-height:56px;font-size:26px;color:#606266">前往</div>
  <div class="inp" style="left:3058px;top:1588px;width:91px;height:56px;text-align:center;font-size:26px;line-height:52px;color:#606266">1</div>
  <div class="pg" style="left:3159px;top:1589px;line-height:56px;font-size:26px;color:#606266">页</div>
</div>


<div id="rshade"></div>
</body></html>
